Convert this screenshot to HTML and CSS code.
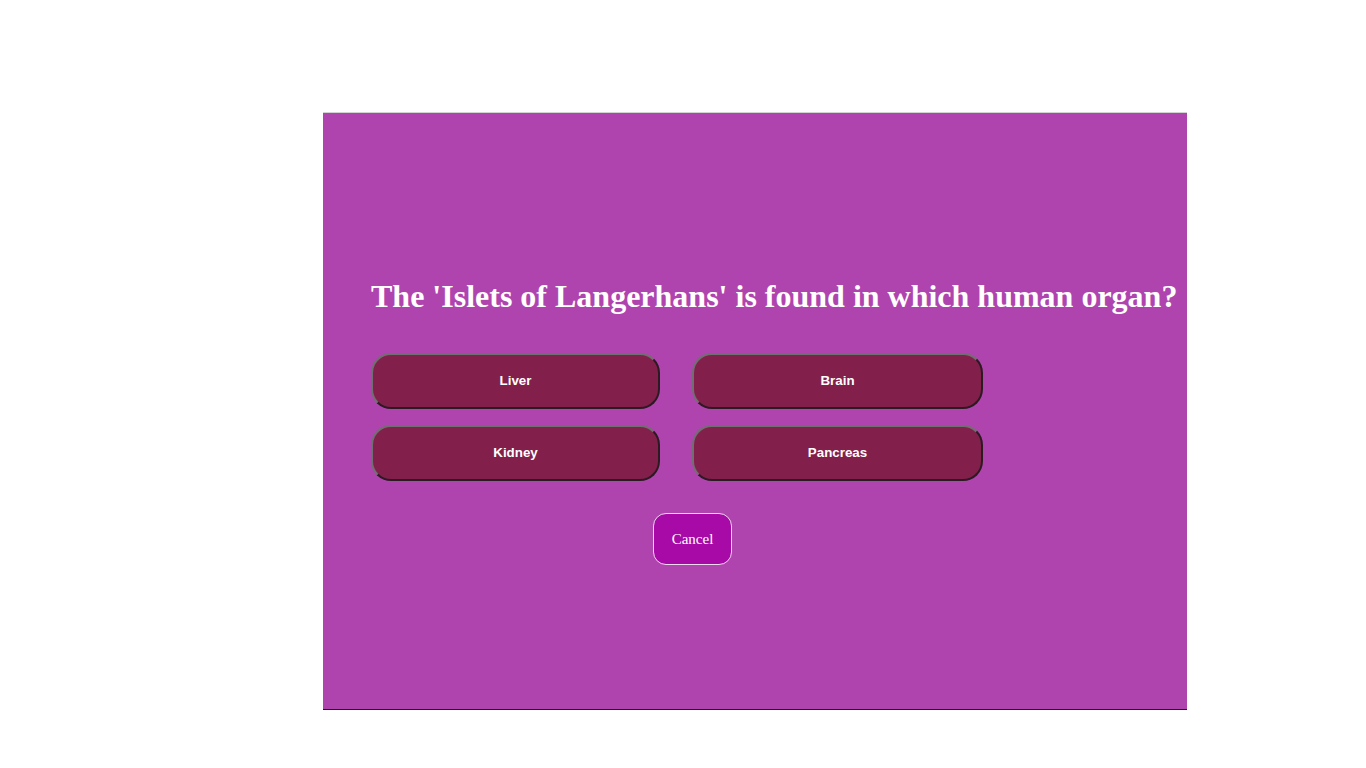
FILE: index.html
```html
<!DOCTYPE html>
<html>
<head>
<meta charset="utf-8">
<link rel="stylesheet" href="styles.css">
</head>
<body>
<div class="panel">
  <h1 class="question">The 'Islets of Langerhans' is found in which human organ?</h1>
  <div class="answers">
    <button class="answer">Liver</button>
    <button class="answer">Brain</button>
    <button class="answer">Kidney</button>
    <button class="answer">Pancreas</button>
  </div>
  <button class="cancel">Cancel</button>
</div>
</body>
</html>
```
FILE: styles.css
```css
html, body {
  margin: 0;
  padding: 0;
  background: #ffffff;
}
body {
  padding: 112px 0 0 323px;
  font-family: "Liberation Serif", serif;
}
.panel {
  box-sizing: border-box;
  width: 864px;
  height: 598px;
  background: #b044ae;
  border-top: 1px solid #d4d4d4;
  border-bottom: 1px solid #2a0f2c;
  padding: 165px 0 0 48px;
}
.question {
  margin: 0;
  font-family: "Liberation Serif", serif;
  font-weight: bold;
  font-size: 32px;
  line-height: 37px;
  color: #ffffff;
  white-space: nowrap;
}
.answers {
  display: grid;
  grid-template-columns: 289px 291px;
  column-gap: 32px;
  row-gap: 16px;
  margin-top: 38px;
}
.answer {
  box-sizing: border-box;
  height: 56px;
  background: #821f4b;
  border: 2px solid;
  border-color: #6f6f6f #2a1a22 #2a1a22 #6f6f6f;
  border-radius: 20px;
  color: #ffffff;
  font-family: "Liberation Sans", Arial, sans-serif;
  font-weight: bold;
  font-size: 13.333px;
  padding: 0 0 2px 0;
}
.cancel {
  display: block;
  box-sizing: border-box;
  margin: 32px 0 0 282px;
  width: 79px;
  height: 52px;
  background: #a70aa7;
  border: 1px solid #f0d8f0;
  border-radius: 13px;
  color: #ffffff;
  font-family: "Liberation Serif", serif;
  font-size: 15px;
  padding: 0;
}
```
